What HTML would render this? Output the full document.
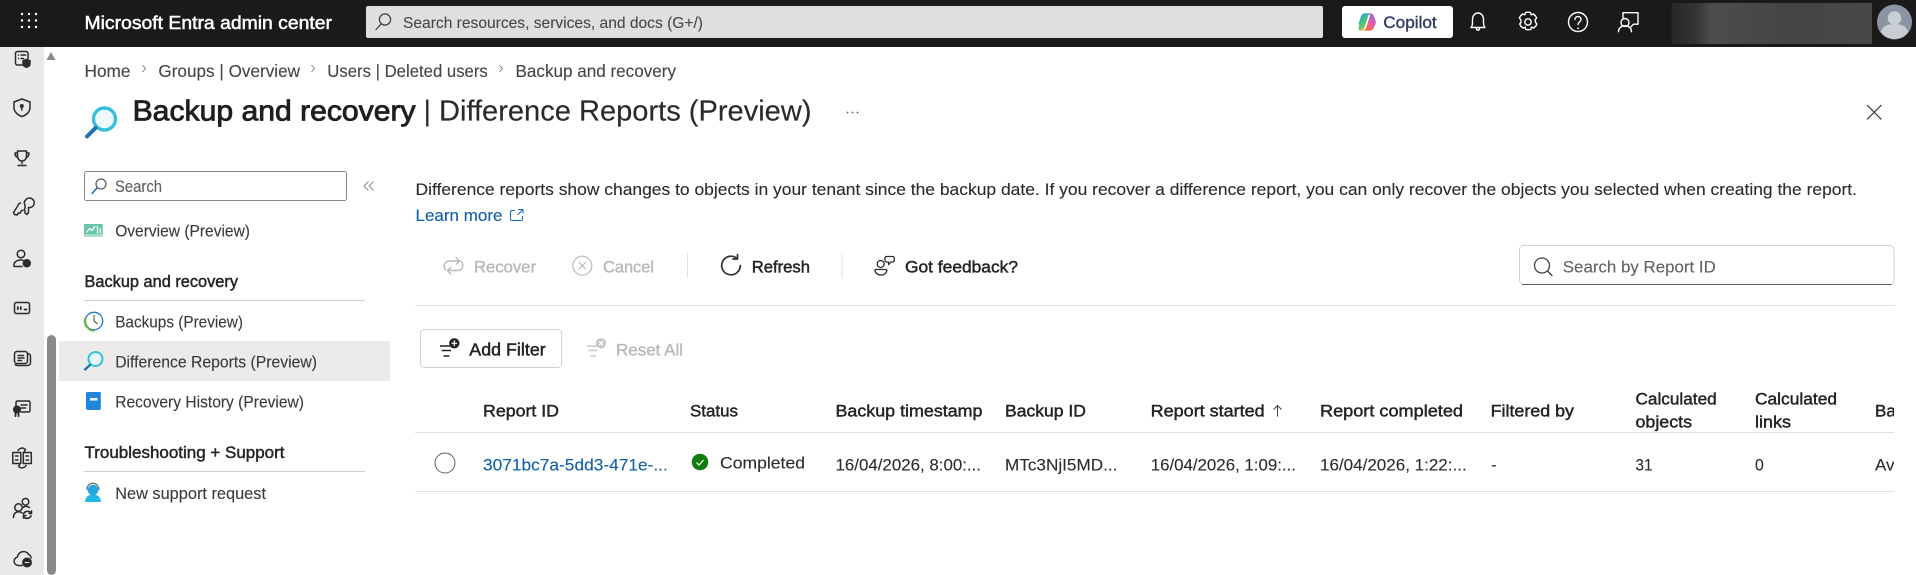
<!DOCTYPE html>
<html lang="en"><head><meta charset="utf-8"><title>Backup and recovery | Difference Reports (Preview)</title>
<style>
html,body{margin:0;padding:0;background:#fff;width:1916px;height:575px;overflow:hidden}
svg{display:block}
text{font-family:"Liberation Sans",sans-serif;font-size:17px;fill:#2c2b2a;white-space:pre;stroke:#2c2b2a;stroke-width:.12}
.sb{stroke:#242424;stroke-width:.45;fill:#242424}
.dis{fill:#b8b7b6;stroke:#b8b7b6;stroke-width:.35}
.crumb{fill:#454443;stroke:#454443;font-size:17.5px}
.nav{fill:#3b3a39;stroke:#3b3a39;font-size:16.500px}
.i{fill:none;stroke:#2b2b2b;stroke-width:1.500;stroke-linecap:round;stroke-linejoin:round}
.w{fill:none;stroke:#fff;stroke-width:1.400;stroke-linecap:round;stroke-linejoin:round}
.g{fill:none;stroke:#b9b8b7;stroke-width:1.400;stroke-linecap:round;stroke-linejoin:round}
</style></head><body>
<svg width="1916" height="575" viewBox="0 0 1916 575" xmlns="http://www.w3.org/2000/svg">
<defs>
<linearGradient id="bl" x1="0" x2="1" y1="0" y2="0"><stop offset="0" stop-color="#272727"/><stop offset=".12" stop-color="#333"/><stop offset=".2" stop-color="#4d4d4d"/><stop offset=".6" stop-color="#444"/><stop offset="1" stop-color="#484848"/></linearGradient>
<linearGradient id="cp" x1="0" y1="0" x2=".6" y2="1"><stop offset="0" stop-color="#2ea0ee"/><stop offset=".55" stop-color="#45c27a"/><stop offset="1" stop-color="#f2c53c"/></linearGradient>
<linearGradient id="cp2" x1=".7" y1="0" x2=".3" y2="1"><stop offset="0" stop-color="#9a63ea"/><stop offset=".55" stop-color="#ea5ba0"/><stop offset="1" stop-color="#f2793a"/></linearGradient>
</defs>

<!-- top bar -->
<rect width="1916" height="47" fill="#1b1a19"/>
<g fill="#fff"><circle cx="22" cy="14" r="1.200"/><circle cx="29" cy="14" r="1.200"/><circle cx="36" cy="14" r="1.200"/><circle cx="22" cy="20.500" r="1.200"/><circle cx="29" cy="20.500" r="1.200"/><circle cx="36" cy="20.500" r="1.200"/><circle cx="22" cy="27" r="1.200"/><circle cx="29" cy="27" r="1.200"/><circle cx="36" cy="27" r="1.200"/></g>
<text x="84.500" y="29" textLength="247.500" lengthAdjust="spacingAndGlyphs" style="font-size:18px;fill:#fff;stroke:#fff;stroke-width:.5">Microsoft Entra admin center</text>
<rect x="366" y="6" width="957" height="32" rx="2" fill="#e1dfdd"/>
<g class="i" style="stroke:#3b3a39;stroke-width:1.200"><circle cx="385" cy="19.500" r="5.600"/><path d="M381 24l-5 5.500"/></g>
<text x="403" y="28" textLength="300" lengthAdjust="spacingAndGlyphs" style="font-size:16px;fill:#4a4948;stroke:#4a4948">Search resources, services, and docs (G+/)</text>
<rect x="1342" y="6" width="111" height="32" rx="3" fill="#fff"/>
<path transform="translate(1,0)" d="M1363.500 13.300H1370c-1.500.5-2.500 1.700-3 3.500l-3.300 10.400c-.6 2-2 3.500-4 3.500-1.500 0-2.400-1.200-2-2.800l.6-2.500c-.5-1-.7-2-.4-3l1.700-5c.8-2.400 2-4.100 4.400-4.100z" fill="url(#cp)"/>
<path transform="translate(-1,0)" d="M1370 13.300c2.500 0 4.500 1.200 5 3l1.700 5c.3 1 .1 2-.4 3l-1.300 3.500c-.8 2-2.400 3-4.500 3h-6.500c1.500-.5 2.800-1.700 3.300-3.500l3.300-10.400c.5-1.700.9-3-.6-3.600z" fill="url(#cp2)"/>
<text x="1383.300" y="28" textLength="53.400" lengthAdjust="spacingAndGlyphs" style="font-size:17px;fill:#2f3e63;stroke:#2f3e63;stroke-width:.4">Copilot</text>
<g class="w">
<path d="M1471 27.500c1.500-1.500 1.500-3 1.500-8 0-4 2.500-6.500 5.500-6.500s5.500 2.500 5.500 6.500c0 5 0 6.500 1.500 8z"/><path d="M1476.500 28c0 3 3 3 3 0"/>
<circle cx="1528" cy="22" r="3.200"/><path d="M1525.500 12.500l1-.2h3l1 .2.6 2.300 2-.8 2.300 1.700 1.200 2.300-1.400 1.800.3 2.500 1.400 1.700-1.200 2.300-2.300 1.700-2-.8-.6 2.300-1 .2h-3l-1-.2-.6-2.300-2 .8-2.300-1.700-1.200-2.300 1.400-1.700-.3-2.500-1.400-1.800 1.200-2.300 2.300-1.700 2 .8z"/>
<circle cx="1578" cy="22" r="9.500"/><path d="M1575 19.500c0-4 6-4 6 0 0 2.500-3 2.500-3 5"/>
<path d="M1623 18v-5.300h15v11.500h-4.500l-2.500 2.500"/><circle cx="1625" cy="22.500" r="4"/><path d="M1618.500 31.700c0-3.700 3-6 6.500-6s6.500 2.300 6.500 6"/>
</g>
<circle cx="1578" cy="28.300" r=".9" fill="#fff"/>
<rect x="1671.500" y="3" width="200.500" height="41" fill="url(#bl)"/>
<circle cx="1894.500" cy="22" r="17.500" fill="#8a94a2"/>
<circle cx="1894.500" cy="18" r="6.800" fill="#c9ced4"/><path d="M1881 32c1-6 7-8 13.500-8s12.500 2 13.500 8c-3 4.500-8 7-13.500 7s-10.500-2.500-13.500-7z" fill="#c9ced4"/>

<!-- left rail -->
<rect y="47" width="44" height="528" fill="#e9e9e9"/>
<path d="M46.500 60h9l-4.500-8z" fill="#8a8a8a"/>
<rect x="47" y="335" width="9" height="240" rx="4.500" fill="#8a8a8a"/>
<g class="i">
<path d="M23.500 65h-6a2 2 0 0 1-2-2V53.500a2 2 0 0 1 2-2h8.500a2 2 0 0 1 2 2v5"/><path d="M18.500 55h.1M21 55h4.500M18.500 58.500h.1M21 58.500h2.500"/>
<path d="M26.500 59.500l3.500 1.200v3c0 1.800-1.500 3-3.500 3.500-2-.5-3.500-1.700-3.500-3.500v-3z" fill="#2b2b2b"/>
<path d="M22 99l8 3v5.500c0 4-3.200 7.500-8 9-4.800-1.500-8-5-8-9V102z"/><path d="M21.800 107v3"/><circle cx="21.800" cy="106" r="1.200" fill="#2b2b2b"/>
<path d="M17.500 151h9v5.500a4.500 4.500 0 0 1-9 0zM17.500 153h-2.500c0 2.800 1 4 3 4.500M26.500 153H29c0 2.800-1 4-3 4.500M22 161v2.500M18 165.500h8"/>
<path d="M25 201a4.800 4.800 0 1 1 3.500 6.500v5l-1.500 2-2-1.500v-2l-1-1 1-1.500v-3.300a4.800 4.800 0 0 1 0-4.700zM20.500 203c-1.500.5-2.500 1.500-2.800 3l-4.200 6.500 1 2 2.500.5 1.500-2 1.500.3 1-2 1.500-1"/>
<circle cx="21" cy="254" r="3.800"/><path d="M14 266.500c-.8-4 2.500-6.500 7-6.500 .7 0 1.300 0 2 .2M14 266.500h8"/><circle cx="26.800" cy="263.300" r="3.500" fill="#2b2b2b"/>
<rect x="14.500" y="302.500" width="15" height="11" rx="2"/>
<path d="M17.800 307v2.200M20.800 307v2.200M24.500 309.500h2" stroke-width="1.800"/>
<rect x="14.500" y="351.500" width="13" height="12" rx="2.500"/><path d="M27.500 353.500c2 .2 3 1 3 3v5.500c0 2.500-1 3.500-3.500 3.500h-9c-1.200 0-2.200-.3-2.800-1M18 355.500h5.500M18 358h6M18 360.500h3.500"/>
<path d="M16 407v-4.500a1.500 1.500 0 0 1 1.500-1.500H28.500a1.500 1.500 0 0 1 1.500 1.500v8a1.500 1.500 0 0 1-1.500 1.500H21M21 405h6M21 408h4.500"/><circle cx="17" cy="409.500" r="3.300" fill="#2b2b2b"/><path d="M15.500 413v3.200M18.500 413v3.200" stroke-width="1.800"/>
<rect x="12.800" y="452.500" width="8" height="11"/><rect x="23.300" y="452.500" width="8" height="11"/><path d="M15.500 456h2.500M15.500 460h2.500M26 456h2.500M26 460h2.500M18 450.500c1-1.500 3-2.500 5-2.500l2.500 1.500-1.200 2M26 465.500c-1 1.500-3 2.500-5 2.500l-2.500-1.500 1.200-2"/>
<circle cx="25.500" cy="501.800" r="3.300"/><circle cx="18.500" cy="507.500" r="3.700"/><path d="M13.500 517.500c0-3.500 2-5.800 5-5.800 1.400 0 2.500.4 3.500 1.200M23 507.500c1.500-1.500 5-1.500 6.500 0"/>
<path d="M23.500 514c.8-2.500 4.800-3.800 7.300-1.500M31.500 511v2.500H29M31 515.800c-1 2.500-5 3.500-7 1.200M23.500 518v-2.500H26" stroke-width="1.600"/>
<path d="M22 565.500h-3.500a4.300 4.300 0 0 1-1-8.500 6 6 0 0 1 11-2.700 4 4 0 0 1 2.500 3.700"/><circle cx="27" cy="562.500" r="4.200" fill="#2b2b2b"/><path d="M25 562.500h4" stroke="#e9e9e9" stroke-width="1"/>
</g>

<!-- breadcrumb -->
<text class="crumb" x="84.500" y="77" textLength="46" lengthAdjust="spacingAndGlyphs">Home</text>
<text class="crumb" x="158.400" y="77" textLength="141.600" lengthAdjust="spacingAndGlyphs">Groups | Overview</text>
<text class="crumb" x="327.300" y="77" textLength="160.500" lengthAdjust="spacingAndGlyphs">Users | Deleted users</text>
<text class="crumb" x="515.500" y="77" textLength="160.500" lengthAdjust="spacingAndGlyphs">Backup and recovery</text>
<g fill="none" stroke="#777" stroke-width=".9"><path d="M142.500 65l3 3.500-3 3.500M311.500 65l3 3.500-3 3.500M499.500 65l3 3.500-3 3.500"/></g>

<!-- heading -->
<circle cx="104.500" cy="119" r="11" fill="#eef9fc" stroke="#39bfdc" stroke-width="3.400"/>
<path d="M95.500 128l-8.500 8.500" stroke="#1d75ae" stroke-width="4" stroke-linecap="round" fill="none"/>
<text x="132.600" y="120.500" textLength="283" lengthAdjust="spacingAndGlyphs" style="font-size:29px;fill:#1f1f1f;stroke:#1f1f1f;stroke-width:.85">Backup and recovery</text>
<text x="423.500" y="120.500" style="font-size:29px;fill:#2a2a2a;stroke:none">|</text>
<text x="439" y="120.500" textLength="372.500" lengthAdjust="spacingAndGlyphs" style="font-size:29px;fill:#2a2a2a;stroke:#2a2a2a;stroke-width:.15">Difference Reports (Preview)</text>
<g fill="#605e5c"><circle cx="847.500" cy="112.500" r=".9"/><circle cx="852.500" cy="112.500" r=".9"/><circle cx="857.500" cy="112.500" r=".9"/></g>
<path d="M1867 105l14.500 14.500M1881.500 105L1867 119.500" stroke="#323130" stroke-width="1.200" fill="none"/>

<!-- side nav -->
<rect x="84.500" y="171.500" width="262" height="29" rx="2" fill="#fff" stroke="#8a8886"/>
<g fill="none" stroke-width="1.300" stroke-linecap="round"><circle cx="101" cy="184" r="5" stroke="#605e5c"/><path d="M97 188l-5 5.500" stroke="#0f6cbd" stroke-width="1.500"/></g>
<text x="115" y="192" textLength="47" lengthAdjust="spacingAndGlyphs" style="font-size:16.500px;fill:#605e5c;stroke:#605e5c">Search</text>
<path d="M368.500 181.500l-4.500 4.500 4.500 4.500M373.500 181.500l-4.500 4.500 4.500 4.500" fill="none" stroke="#8a8886" stroke-width="1"/>

<rect x="84" y="224" width="18.700" height="12.700" fill="#66c4aa"/>
<path d="M86.500 232.500l3-4 2.500 2 3-4.500M97.500 226v7.500M100.300 228v5.500" fill="none" stroke="#fff" stroke-width="1.200"/>
<rect x="84" y="234" width="18.700" height="2.700" fill="#a5dccb"/>
<text class="nav" x="115.200" y="236.500" textLength="134.800" lengthAdjust="spacingAndGlyphs">Overview (Preview)</text>
<text x="84.500" y="287" textLength="153.500" lengthAdjust="spacingAndGlyphs" class="sb" style="font-size:16.500px">Backup and recovery</text>
<rect x="84" y="300" width="281" height="1" fill="#cfcfcf"/>
<circle cx="94" cy="321" r="8.700" fill="#fff" stroke="#2f78c4" stroke-width="1.300"/>
<path d="M88 328a9.300 9.300 0 0 1-2.500-10" fill="none" stroke="#63b945" stroke-width="2.400"/><path d="M88 328.500a9.300 9.300 0 0 0 7 2" fill="none" stroke="#63b945" stroke-width="1.800"/>
<path d="M94 315v6l3.500 3" fill="none" stroke="#605e5c" stroke-width="1.200"/>
<text class="nav" x="115.200" y="327.700" textLength="127.800" lengthAdjust="spacingAndGlyphs">Backups (Preview)</text>
<rect x="59" y="341" width="331" height="40" fill="#edebe9"/>
<circle cx="95.500" cy="359" r="7" fill="#e6f8fc" stroke="#3abfdc" stroke-width="2"/><path d="M90 365l-5 4.500" stroke="#1d75ae" stroke-width="2.400" stroke-linecap="round" fill="none"/>
<text class="nav" x="115.200" y="367.700" textLength="201.800" lengthAdjust="spacingAndGlyphs">Difference Reports (Preview)</text>
<path d="M87.500 392H100c.5 0 .8.400.8 1v15.500c0 1-.6 1.500-1.800 1.500H88c-1.200 0-2-.7-2-2V393.500c0-1 .5-1.500 1.500-1.500z" fill="#1f86dc"/>
<rect x="90" y="398" width="7.500" height="2.600" fill="#e8f3fc"/>
<text class="nav" x="115.200" y="407.700" textLength="188.800" lengthAdjust="spacingAndGlyphs">Recovery History (Preview)</text>
<text x="84.500" y="458" textLength="200" lengthAdjust="spacingAndGlyphs" class="sb" style="font-size:16.500px">Troubleshooting + Support</text>
<rect x="84" y="471" width="281" height="1" fill="#cfcfcf"/>
<circle cx="93" cy="490" r="5.300" fill="#22a7e0"/><path d="M85 502c.3-5 3.500-7.500 8-7.500s7.700 2.500 8 7.500z" fill="#22b7e8"/><path d="M87 490c-.5-9 12-9 12 0" fill="none" stroke="#5f6a70" stroke-width="1.200"/>
<text class="nav" x="115.200" y="499" textLength="150.800" lengthAdjust="spacingAndGlyphs">New support request</text>

<!-- description -->
<text x="415.500" y="195" textLength="1441.500" lengthAdjust="spacingAndGlyphs">Difference reports show changes to objects in your tenant since the backup date. If you recover a difference report, you can only recover the objects you selected when creating the report.</text>
<text x="415.500" y="221" textLength="87" lengthAdjust="spacingAndGlyphs" style="fill:#0f5ea8;stroke:#0f5ea8">Learn more</text>
<path d="M515 210.500h-3a1.500 1.500 0 0 0-1.500 1.500v7a1.500 1.500 0 0 0 1.500 1.500h9a1.500 1.500 0 0 0 1.500-1.500v-3M518 209.500h5v4M523 209.500l-5.500 5.500" fill="none" stroke="#0f6cbd" stroke-width="1"/>

<!-- toolbar -->
<g class="g"><path d="M445.500 270c-3-4-.5-9 4-9h10l-3.500-3.500M460 261l-3.500 3"/><path d="M461.500 261.500c3 4 .5 9-4 9h-10l3.500 3.500M447.500 270.500l3.500-3"/></g>
<text class="dis" x="474" y="272.500" textLength="62" lengthAdjust="spacingAndGlyphs">Recover</text>
<g class="g" style="stroke-width:1.100"><circle cx="582.300" cy="265.700" r="9.500"/><path d="M579 262.400l6.600 6.600M585.600 262.400l-6.600 6.600"/></g>
<text class="dis" x="603" y="272.500" textLength="51" lengthAdjust="spacingAndGlyphs">Cancel</text>
<rect x="687" y="253" width="1" height="25" fill="#e0e0e0"/>
<g fill="none" stroke="#323130" stroke-width="1.700" stroke-linecap="round" stroke-linejoin="round"><path d="M736.500 258a9.300 9.300 0 1 0 3.800 7.500"/><path d="M737.500 254.500v4.500H733"/></g>
<text class="sb" x="751.700" y="272.500" textLength="58.300" lengthAdjust="spacingAndGlyphs">Refresh</text>
<rect x="841.500" y="253" width="1" height="25" fill="#e0e0e0"/>
<g class="i" style="stroke-width:1.300"><circle cx="880.700" cy="264" r="3.500"/><path d="M875.500 269.500h10.500c.5 0 .8.300.8.800 0 2.800-2.600 4.700-5.800 4.700s-6-1.900-6-4.700c0-.5.100-.8.500-.8z"/><path d="M886.500 256.500h6.300a1.500 1.500 0 0 1 1.500 1.500v2.500a1.500 1.500 0 0 1-1.500 1.500h-1.800l-2.500 2.500v-2.500h-2a1.500 1.500 0 0 1-1.500-1.500V258a1.500 1.500 0 0 1 1.500-1.500z"/></g>
<text class="sb" x="905" y="272.500" textLength="113" lengthAdjust="spacingAndGlyphs">Got feedback?</text>
<rect x="1519.500" y="245.500" width="374.500" height="39" rx="4" fill="#fff" stroke="#d1d1d1"/>
<rect x="1522" y="284" width="369.500" height="1" fill="#616161"/>
<g fill="none" stroke="#424242" stroke-width="1.300" stroke-linecap="round"><circle cx="1542" cy="265.500" r="7.500"/><path d="M1547.500 271l4.500 4.500"/></g>
<text x="1562.800" y="272.700" textLength="153" lengthAdjust="spacingAndGlyphs" style="fill:#616161;stroke:#616161">Search by Report ID</text>
<rect x="415" y="305" width="1480" height="1" fill="#e0e0e0"/>

<!-- filters -->
<rect x="420.500" y="329.500" width="141" height="38" rx="4" fill="#fff" stroke="#d1d1d1"/>
<g stroke="#242424" stroke-width="1.400" fill="none"><path d="M440 346h12M441.700 350.500h9.300M443.500 356h6"/></g>
<circle cx="454.300" cy="343.300" r="5.200" fill="#242424"/><path d="M451.500 343.300h5.600M454.300 340.500v5.600" stroke="#fff" stroke-width="1.200"/>
<text class="sb" x="469.300" y="355.300" textLength="76.400" lengthAdjust="spacingAndGlyphs" style="font-size:17.500px">Add Filter</text>
<g stroke="#c8c7c6" stroke-width="1.400" fill="none"><path d="M586.700 346h12M588.400 350.500h9.300M590.200 356h6"/></g>
<circle cx="601" cy="343.300" r="5.200" fill="#c8c7c6"/><path d="M599 341.300l4 4M603 341.300l-4 4" stroke="#fff" stroke-width="1.200"/>
<text class="dis" x="616" y="355.300" textLength="67" lengthAdjust="spacingAndGlyphs">Reset All</text>

<!-- table -->
<text class="sb" x="483" y="416.300" textLength="76" lengthAdjust="spacingAndGlyphs">Report ID</text>
<text class="sb" x="690" y="416.300" textLength="48" lengthAdjust="spacingAndGlyphs">Status</text>
<text class="sb" x="835.500" y="416.300" textLength="147" lengthAdjust="spacingAndGlyphs">Backup timestamp</text>
<text class="sb" x="1005" y="416.300" textLength="81" lengthAdjust="spacingAndGlyphs">Backup ID</text>
<text class="sb" x="1150.700" y="416.300" textLength="114" lengthAdjust="spacingAndGlyphs">Report started</text>
<path d="M1277.500 405.500v11M1273.500 409.500l4-4 4 4" fill="none" stroke="#424242" stroke-width="1"/>
<text class="sb" x="1320" y="416.300" textLength="143" lengthAdjust="spacingAndGlyphs">Report completed</text>
<text class="sb" x="1490.600" y="416.300" textLength="83.400" lengthAdjust="spacingAndGlyphs">Filtered by</text>
<text class="sb" x="1635.500" y="404.500" textLength="81.200" lengthAdjust="spacingAndGlyphs">Calculated</text>
<text class="sb" x="1635.500" y="427.500" textLength="56.500" lengthAdjust="spacingAndGlyphs">objects</text>
<text class="sb" x="1755" y="404.500" textLength="82" lengthAdjust="spacingAndGlyphs">Calculated</text>
<text class="sb" x="1755" y="427.500" textLength="36" lengthAdjust="spacingAndGlyphs">links</text>
<svg x="1875" y="395" width="19" height="30"><text class="sb" x="0" y="21.300">Ba</text></svg>
<rect x="415" y="432" width="1479" height="1" fill="#e0e0e0"/>
<circle cx="445" cy="463" r="10" fill="#fff" stroke="#605e5c" stroke-width="1"/>
<text x="483" y="470.700" textLength="184.800" lengthAdjust="spacingAndGlyphs" style="fill:#0f5ea8;stroke:#0f5ea8">3071bc7a-5dd3-471e-...</text>
<circle cx="700" cy="462" r="8.300" fill="#107c10"/><path d="M696.500 462.500l2.500 2.500 4.500-5" fill="none" stroke="#fff" stroke-width="1.200"/>
<text x="720" y="468.700" textLength="85" lengthAdjust="spacingAndGlyphs">Completed</text>
<text x="835.500" y="470.700" textLength="145.500" lengthAdjust="spacingAndGlyphs">16/04/2026, 8:00:...</text>
<text x="1005" y="470.700" textLength="112.400" lengthAdjust="spacingAndGlyphs">MTc3NjI5MD...</text>
<text x="1150.700" y="470.700" textLength="145.300" lengthAdjust="spacingAndGlyphs">16/04/2026, 1:09:...</text>
<text x="1320" y="470.700" textLength="146.700" lengthAdjust="spacingAndGlyphs">16/04/2026, 1:22:...</text>
<text x="1491" y="470.700">-</text>
<text x="1635.500" y="470.700" textLength="17" lengthAdjust="spacingAndGlyphs">31</text>
<text x="1755" y="470.700" textLength="8.800" lengthAdjust="spacingAndGlyphs">0</text>
<svg x="1875" y="450" width="19" height="30"><text x="0" y="20.700">Av</text></svg>
<rect x="415" y="491" width="1479" height="1" fill="#e0e0e0"/>
</svg>
</body></html>
